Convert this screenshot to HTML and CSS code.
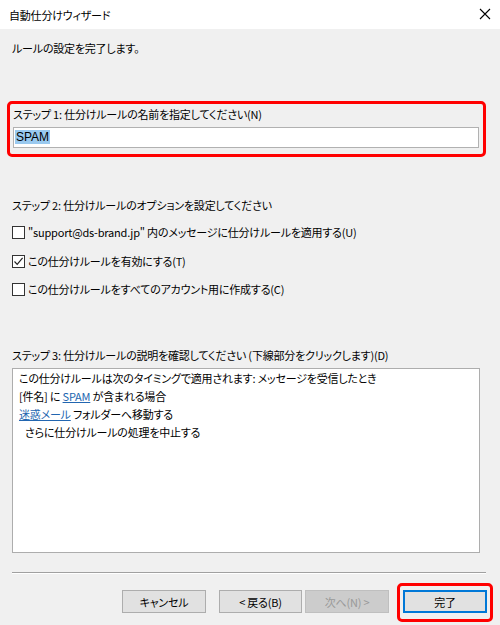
FILE: index.html
```html
<!DOCTYPE html>
<html lang="ja">
<head>
<meta charset="utf-8">
<title>自動仕分けウィザード</title>
<link rel="stylesheet" href="styles.css">
</head>
<body>
<div class="window">
  <div class="titlebar">
    <span class="title">自動仕分けウィザード</span>
    <svg class="close" width="12" height="12" viewBox="0 0 12 12"><path d="M1 1L11 11M11 1L1 11" stroke="#000" stroke-width="1.1" fill="none"/></svg>
  </div>
  <div class="main">
    <div class="intro">ルールの設定を完了します。</div>

    <div class="highlight step1">
      <div class="label">ステップ 1: 仕分けルールの名前を指定してください(N)</div>
      <div class="field"><span class="sel">SPAM</span></div>
    </div>

    <div class="label step2">ステップ 2: 仕分けルールのオプションを設定してください</div>
    <div class="check cb1"><span class="box"></span><span>"support@ds-brand.jp" 内のメッセージに仕分けルールを適用する(U)</span></div>
    <div class="check cb2"><span class="box"><svg width="11" height="11" viewBox="0 0 11 11"><path d="M1.5 5.5L4.2 8.3L9.6 1.8" stroke="#222" stroke-width="1.2" fill="none"/></svg></span><span>この仕分けルールを有効にする(T)</span></div>
    <div class="check cb3"><span class="box"></span><span>この仕分けルールをすべてのアカウント用に作成する(C)</span></div>

    <div class="label step3">ステップ 3: 仕分けルールの説明を確認してください (下線部分をクリックします)(D)</div>
    <div class="desc">
      <div>この仕分けルールは次のタイミングで適用されます: メッセージを受信したとき</div>
      <div>[件名] に <span class="link">SPAM</span> が含まれる場合</div>
      <div><span class="link">迷惑メール</span> フォルダーへ移動する</div>
      <div class="indent">さらに仕分けルールの処理を中止する</div>
    </div>

    <div class="separator"></div>

    <div class="buttons">
      <button class="btn cancel">キャンセル</button>
      <button class="btn back">&lt; 戻る(B)</button>
      <button class="btn next" disabled>次へ(N) &gt;</button>
      <div class="highlight finish-wrap"><button class="btn default">完了</button></div>
    </div>
  </div>
</div>
</body>
</html>
```
FILE: styles.css
```css
* { box-sizing: border-box; }
html, body {
  margin: 0;
  padding: 0;
  background: #f0f0f0;
}
body {
  font-family: "Noto Sans CJK JP", "Noto Sans", sans-serif;
  font-size: 11px;
  letter-spacing: -0.2px;
  line-height: 18px;
  color: #000;
  font-feature-settings: "palt";
}
.window {
  width: 500px;
  height: 625px;
  overflow: hidden;
}
.titlebar {
  height: 29px;
  background: #fff;
  display: flex;
  align-items: center;
  justify-content: space-between;
  padding: 0 9px 0 9px;
}
.title { line-height: 18px; }
.close { margin-right: 0; margin-top: -1px; }
.main {
  padding-left: 12px;
  width: 486px;
}
.intro { margin-top: 10px; }
.highlight {
  border: 3px solid #ff0000;
  border-radius: 5px;
}
.step1 {
  margin-top: 44px;
  margin-left: -5px;
  width: 479px;
  padding: 1px 0 6px 3px;
}
.field {
  margin-top: 4px;
  width: 466px;
  height: 21px;
  background: #fff;
  border: 1px solid #b1b1b1;
  padding: 1px 0 0 1px;
  font-family: "Liberation Sans", "Noto Sans", sans-serif;
  font-size: 12px;
  letter-spacing: 0;
  line-height: 17px;
}
.sel {
  background: #99c9ef;
  padding: 0 1px;
}
.step2 { margin-top: 39px; }
.check {
  display: flex;
  align-items: center;
  height: 18px;
}
.cb1 { margin-top: 9px; }
.cb2 { margin-top: 11px; }
.cb3 { margin-top: 10px; }
.box {
  width: 13px;
  height: 13px;
  border: 1px solid #333;
  background: #fff;
  margin-right: 3px;
  display: flex;
  align-items: center;
  justify-content: center;
  flex: none;
}
.box svg { display: block; }
.step3 { margin-top: 48px; }
.desc {
  margin-top: 4px;
  width: 468px;
  height: 185px;
  background: #fff;
  border: 1px solid #adadad;
  padding: 0 0 0 6px;
}
.indent { padding-left: 6px; }
.link {
  color: #2266b0;
  text-decoration: underline;
}
.separator {
  margin-top: 19px;
  width: 474px;
  border-top: 1px solid #a0a0a0;
  border-bottom: 1px solid #fff;
}
.buttons {
  margin-top: 9px;
  display: flex;
  justify-content: flex-end;
  align-items: flex-start;
  margin-right: -7px;
}
.btn {
  font-family: "Noto Sans CJK JP", "Noto Sans", sans-serif;
  font-feature-settings: "palt";
  font-size: 11px;
  letter-spacing: -0.2px;
  line-height: 18px;
  height: 23px;
  width: 84px;
  padding: 0;
  background: #e1e1e1;
  border: 1px solid #adadad;
  color: #000;
  margin-top: 7px;
}
.back { margin-left: 13px; width: 83px; }
.next {
  margin-left: 3px;
  background: #cccccc;
  border-color: #bfbfbf;
  color: #999;
}
.finish-wrap {
  margin-left: 8px;
  padding: 4px 3px 6px 3px;
  width: 96px;
}
.default {
  margin-top: 0;
  border: 1px solid #0078d7;
  box-shadow: inset 0 0 0 1px #0078d7;
}
```
